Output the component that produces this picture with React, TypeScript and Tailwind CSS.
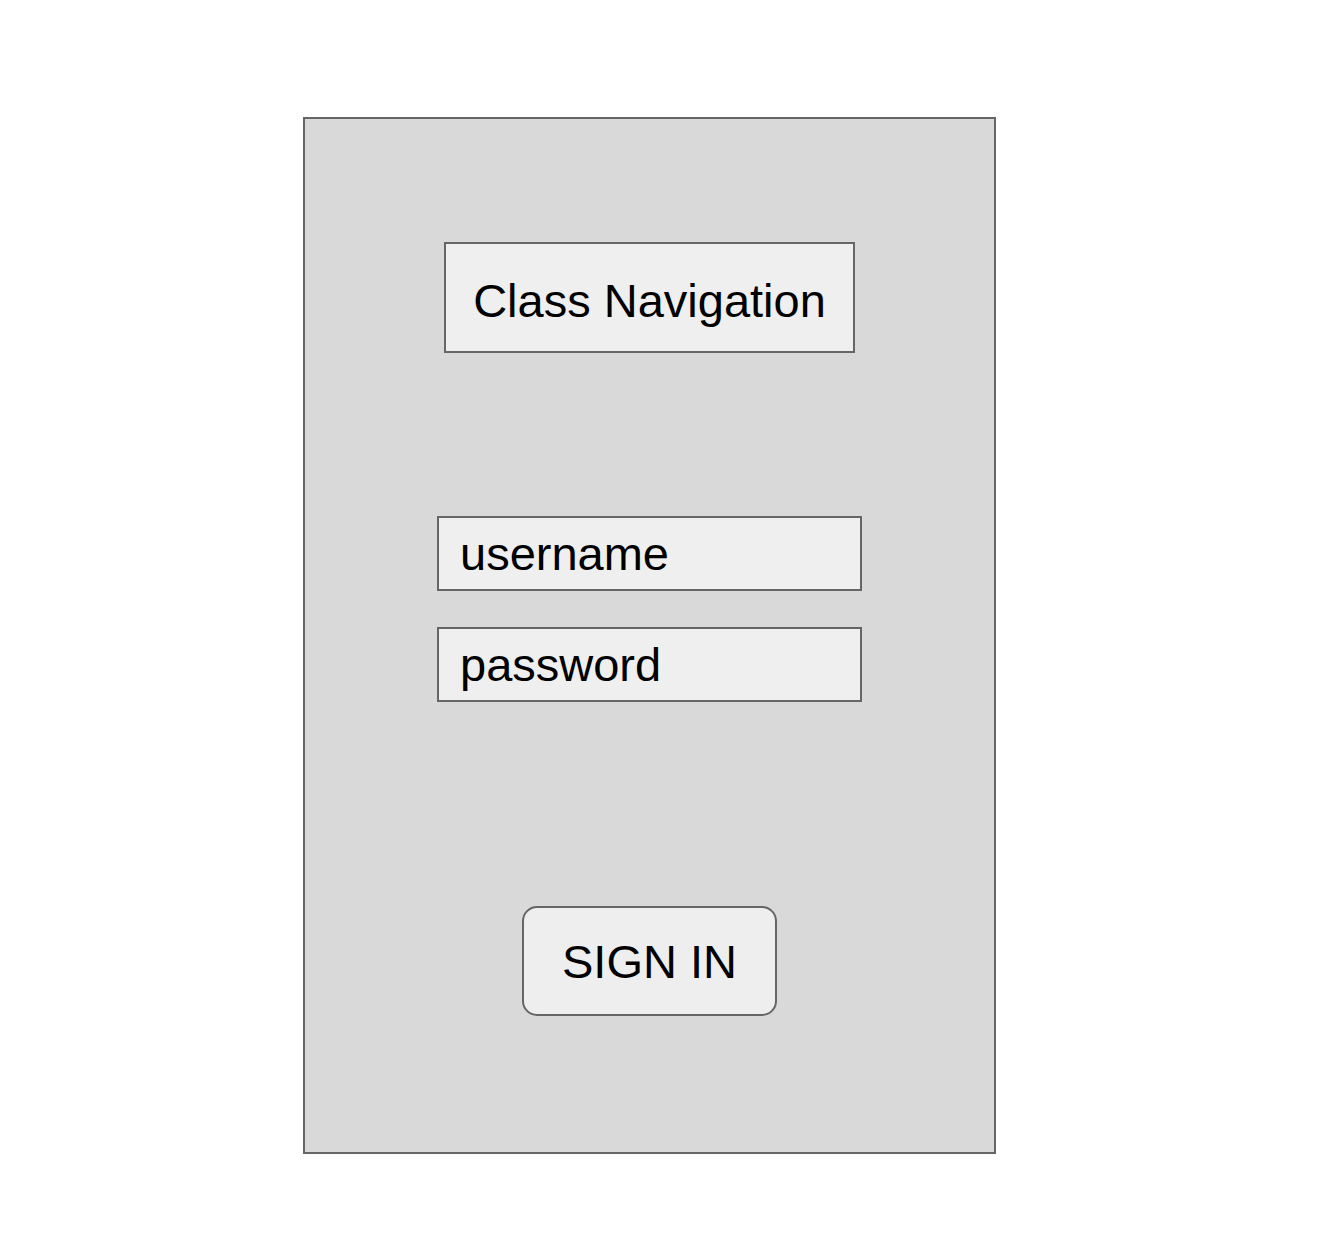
export default function App() {
  return (
    <div className="min-h-[1242px] w-full bg-white pl-[303px] pt-[117px] font-['Liberation_Sans',Arial,sans-serif] text-black">
      <div className="flex h-[1037px] w-[693px] flex-col items-center border-2 border-[#666666] bg-[#d9d9d9] pt-[123px]">
        {/* Title */}
        <div className="flex h-[111px] w-[411px] items-center justify-center border-2 border-[#666666] bg-[#efefef] pt-[6px] text-[47px] leading-none">
          Class Navigation
        </div>

        {/* Fields */}
        <div className="mt-[163px] flex h-[75px] w-[425px] items-center border-2 border-[#666666] bg-[#efefef] pl-[21px] text-[47px] leading-none">
          username
        </div>
        <div className="mt-[36px] flex h-[75px] w-[425px] items-center border-2 border-[#666666] bg-[#efefef] pl-[21px] text-[47px] leading-none">
          password
        </div>

        {/* Button */}
        <button className="mt-[204px] flex h-[110px] w-[255px] items-center justify-center rounded-[15px] border-2 border-[#666666] bg-[#eeeeee] text-[47px] leading-none">
          SIGN IN
        </button>
      </div>
    </div>
  );
}
